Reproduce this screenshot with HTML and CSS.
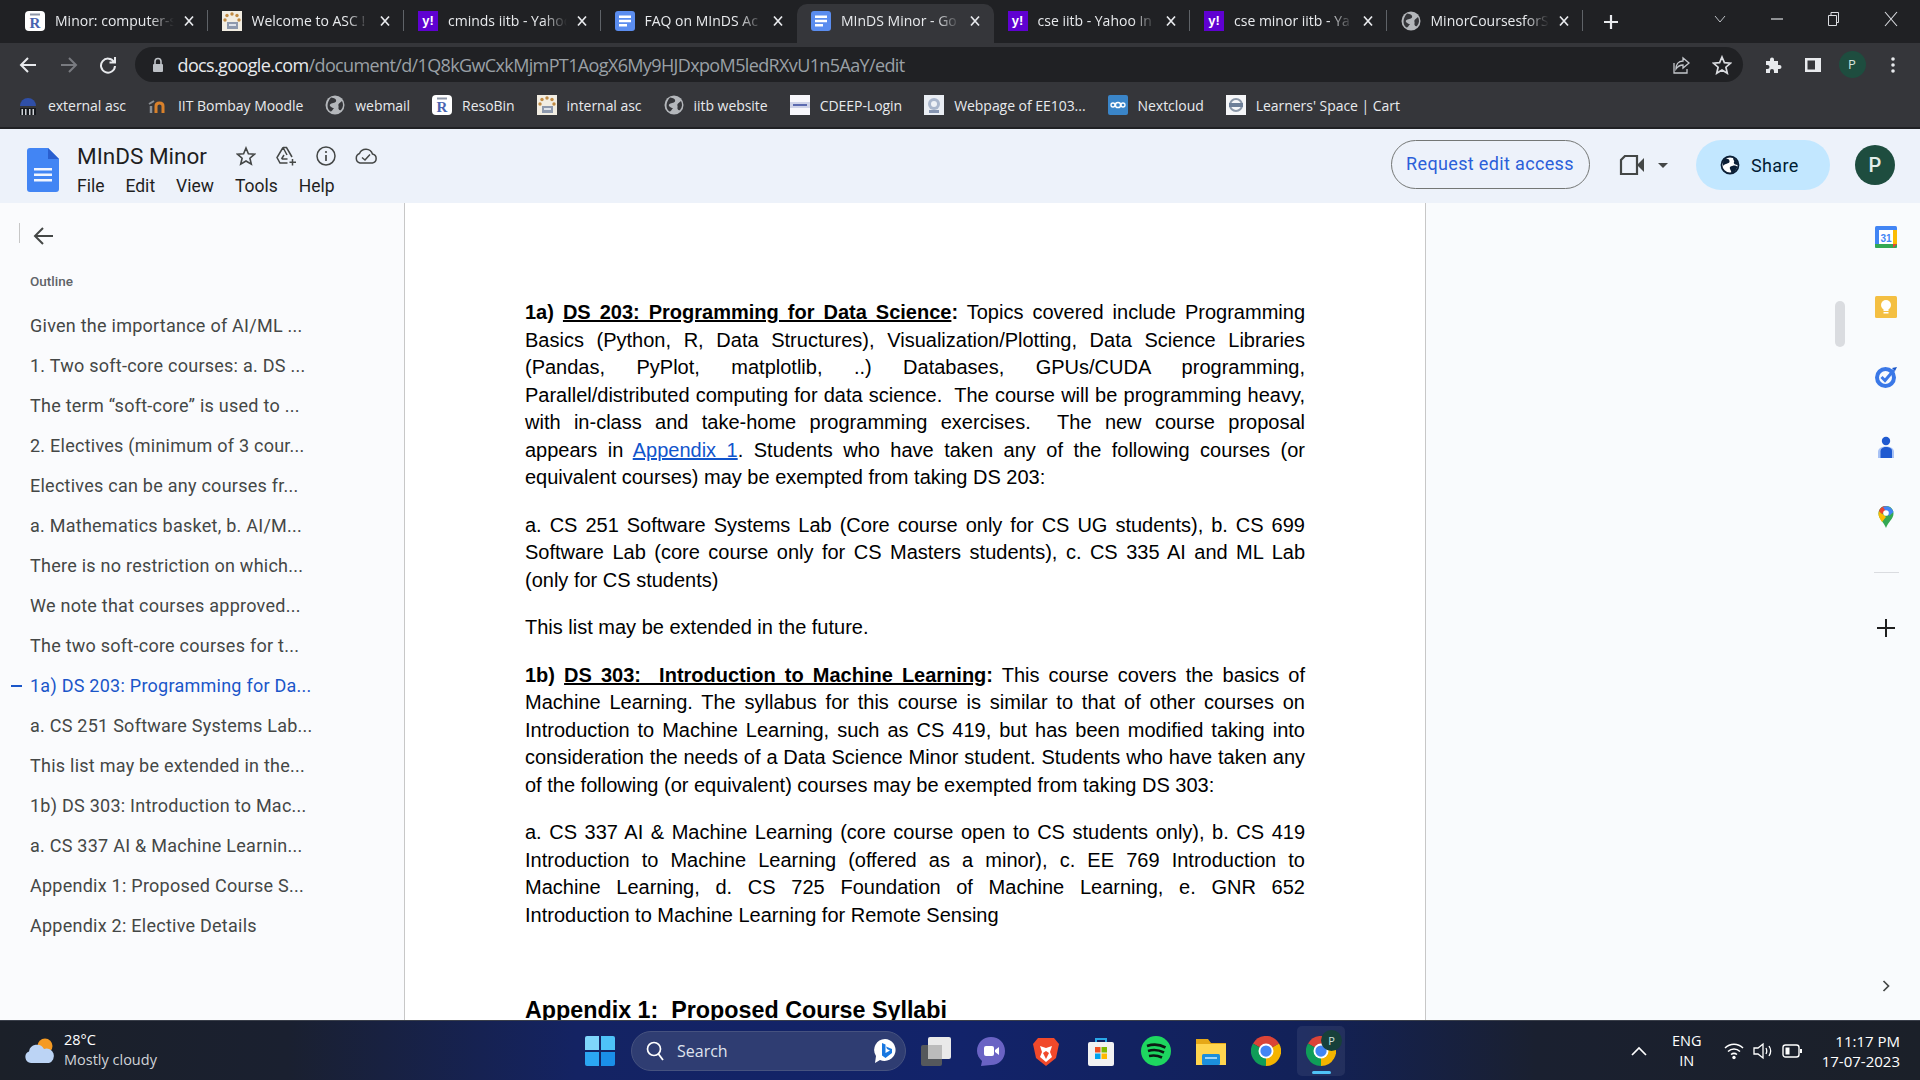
FILE: index.html
```html
<!DOCTYPE html>
<html lang="en">
<head>
<meta charset="utf-8">
<title>MInDS Minor - Google Docs</title>
<link rel="stylesheet" href="styles.css">
</head>
<body>
<svg class="defs" xmlns="http://www.w3.org/2000/svg">
  <symbol id="i-doc" viewBox="0 0 32 44"><path d="M3 0H21L32 11V41a3 3 0 0 1-3 3H3a3 3 0 0 1-3-3V3a3 3 0 0 1 3-3z" fill="#4285f4"/><path d="M21 0L32 11H21z" fill="#2a5fcf"/><path d="M7 20H25V22.500H7zM7 25.500H25V28H7zM7 31H25V33.500H7z" fill="#f1f5fe"/></symbol>
  <symbol id="i-doctab" viewBox="0 0 20 20"><rect width="20" height="20" rx="3" fill="#5b8def"/><path d="M4 4.500H16V7H4zM4 8.800H16V11.300H4zM4 13H12V15.500H4z" fill="#fff"/></symbol>
  <symbol id="i-globe" viewBox="0 0 20 20"><circle cx="10" cy="10" r="9.500" fill="#b4b7bb"/><path d="M6 2.500C9 3 12 4 11 6.500 10 8.500 6.500 7.500 5 9.500 4 11 7 13 9 13 7.500 15 6.500 17 5.500 16.500 2 14.500 1 8 6 2.500zM17 6C18.500 9 18.500 12 16 15 14.500 16 13 14 13.500 12.500 14 11 12.500 10 14 8.500z" fill="#35363a"/></symbol>
  <symbol id="i-reso" viewBox="0 0 20 20"><rect width="20" height="20" rx="4" fill="#fff"/><rect x="5" y="2.500" width="10" height="2" fill="#8d96a8"/><text class="reso-r" x="10" y="17" text-anchor="middle">R</text></symbol>
  <symbol id="i-asc" viewBox="0 0 20 20"><rect width="20" height="20" fill="#f2ede2"/><g fill="#c08a43"><circle cx="10" cy="3" r="1.700"/><circle cx="5" cy="4.500" r="1.700"/><circle cx="15" cy="4.500" r="1.700"/><circle cx="3" cy="9" r="1.700"/><circle cx="17" cy="9" r="1.700"/></g><rect x="5" y="11" width="11" height="7" fill="#8e99ad"/><rect x="7" y="13" width="7" height="2" fill="#dfe3ea"/></symbol>
  <symbol id="i-close" viewBox="0 0 14 14"><path d="M3 2.500L11 11.500M11 2.500L3 11.500" stroke="#e8eaed" stroke-width="1.700" fill="none"/></symbol>
  <symbol id="i-chrome" viewBox="0 0 32 32"><path d="M16 16L2.100 8A16 16 0 0 1 29.900 8z" fill="#db4437"/><path d="M16 16L29.900 8A16 16 0 0 1 16 32z" fill="#f4b400"/><path d="M16 16L16 32A16 16 0 0 1 2.100 8z" fill="#0f9d58"/><circle cx="16" cy="16" r="8" fill="#fff"/><circle cx="16" cy="16" r="6" fill="#4285f4"/></symbol>
</svg>

<div class="tabstrip">
  <div class="tab"><svg class="fav"><use href="#i-reso"/></svg><span class="tab-t">Minor: computer-s</span><svg class="x"><use href="#i-close"/></svg></div>
  <div class="tab"><svg class="fav"><use href="#i-asc"/></svg><span class="tab-t">Welcome to ASC !</span><svg class="x"><use href="#i-close"/></svg></div>
  <div class="tab"><span class="yh">y!</span><span class="tab-t">cminds iitb - Yahoo</span><svg class="x"><use href="#i-close"/></svg></div>
  <div class="tab tab-pre"><svg class="fav"><use href="#i-doctab"/></svg><span class="tab-t">FAQ on MInDS Ac</span><svg class="x"><use href="#i-close"/></svg></div>
  <div class="tab tab-on"><svg class="fav"><use href="#i-doctab"/></svg><span class="tab-t">MInDS Minor - Go</span><svg class="x"><use href="#i-close"/></svg></div>
  <div class="tab"><span class="yh">y!</span><span class="tab-t">cse iitb - Yahoo In</span><svg class="x"><use href="#i-close"/></svg></div>
  <div class="tab"><span class="yh">y!</span><span class="tab-t">cse minor iitb - Ya</span><svg class="x"><use href="#i-close"/></svg></div>
  <div class="tab"><svg class="fav"><use href="#i-globe"/></svg><span class="tab-t">MinorCoursesforS</span><svg class="x"><use href="#i-close"/></svg></div>
  <svg class="newtab" viewBox="0 0 18 18"><path d="M9 2V16M2 9H16" stroke="#e8eaed" stroke-width="2.200"/></svg>
  <div class="winctl">
    <svg class="wc-v" viewBox="0 0 14 10"><path d="M2 2L7 8L12 2" stroke="#bdc1c6" fill="none"/></svg>
    <svg class="wc-min" viewBox="0 0 14 14"><path d="M1 7H13" stroke="#dadce0" stroke-width="1.200"/></svg>
    <svg class="wc-max" viewBox="0 0 14 16"><path d="M2.500 4.500H10.500V14.500H2.500zM5 4.500V1.500H12.500V11.500H10.500" stroke="#dadce0" fill="none"/></svg>
    <svg class="wc-x" viewBox="0 0 16 16"><path d="M2 1L14 15M14 1L2 15" stroke="#dadce0" stroke-width="1.100"/></svg>
  </div>
</div>

<div class="toolbar">
  <svg class="nav" viewBox="0 0 18 18"><path d="M17 9H2M9 2L2 9L9 16" stroke="#e8eaed" stroke-width="2" fill="none"/></svg>
  <svg class="nav" viewBox="0 0 18 18"><path d="M1 9H16M9 2L16 9L9 16" stroke="#797b80" stroke-width="2" fill="none"/></svg>
  <svg class="nav" viewBox="0 0 18 18"><path d="M15 6A7 7 0 1 0 16 10M16 1V6.500H10.500" stroke="#e8eaed" stroke-width="2" fill="none"/></svg>
  <div class="omni">
    <svg class="lock" viewBox="0 0 12 16"><path d="M3 7V4.500a3 3 0 0 1 6 0V7" stroke="#bdc1c6" stroke-width="1.600" fill="none"/><rect x="1" y="7" width="10" height="8" rx="1" fill="#bdc1c6"/></svg>
    <span class="url"><span class="url-h">docs.google.com</span>/document/d/1Q8kGwCxkMjmPT1AogX6My9HJDxpoM5ledRXvU1n5AaY/edit</span>
    <svg class="om-i om-share" viewBox="0 0 20 20"><path d="M11 6C6 6 4 10 4 14 6 11 8 10 11 10V13L17 8L11 3zM2 8V18H15V14" stroke="#c4c7cc" stroke-width="1.300" fill="none"/></svg>
    <svg class="om-i om-star" viewBox="0 0 20 20"><path d="M10 2L12.400 7.700 18.500 8.200 13.900 12.200 15.300 18.200 10 15 4.700 18.200 6.100 12.200 1.500 8.200 7.600 7.700z" stroke="#dadce0" stroke-width="1.700" fill="none"/></svg>
  </div>
  <svg class="tb-puz" viewBox="0 0 18 18"><path d="M2 5H6V3.500a2 2 0 0 1 4 0V5H14V9H15.500a2 2 0 0 1 0 4H14V17H10V15a2 2 0 0 0-4 0V17H2V13H3.500a2 2 0 0 0 0-4H2z" fill="#e8eaed"/></svg>
  <svg class="tb-side" viewBox="0 0 18 18"><path d="M1 2H17V16H1zM3.500 4.500V13.500H11V4.500z" fill="#e8eaed" fill-rule="evenodd"/></svg>
  <span class="tb-av">P</span>
  <svg class="tb-dots" viewBox="0 0 4 18"><circle cx="2" cy="3" r="1.800" fill="#e8eaed"/><circle cx="2" cy="9" r="1.800" fill="#e8eaed"/><circle cx="2" cy="15" r="1.800" fill="#e8eaed"/></svg>
</div>

<div class="bookmarks">
  <div class="bm"><svg class="fav" viewBox="0 0 20 20"><path d="M2 11A8 8 0 0 1 18 11z" fill="#2f4fa8"/><path d="M2 13H18V20H2z" fill="#15181d"/><path d="M3.500 14H5V20H3.500zM7 14H8.500V20H7zM11 14H12.500V20H11zM14.500 14H16V20H14.500z" fill="#cfd2d6"/></svg><span>external asc</span></div>
  <div class="bm"><svg class="fav" viewBox="0 0 20 20"><path d="M3 18V11" stroke="#8a8f94" stroke-width="2.500"/><path d="M8 18V11C8 7 15 7 15 11V18" stroke="#d9812b" stroke-width="3" fill="none"/><path d="M1 9L6 6" stroke="#8a8f94" stroke-width="2"/></svg><span>IIT Bombay Moodle</span></div>
  <div class="bm"><svg class="fav"><use href="#i-globe"/></svg><span>webmail</span></div>
  <div class="bm"><svg class="fav"><use href="#i-reso"/></svg><span>ResoBin</span></div>
  <div class="bm"><svg class="fav"><use href="#i-asc"/></svg><span>internal asc</span></div>
  <div class="bm"><svg class="fav"><use href="#i-globe"/></svg><span>iitb website</span></div>
  <div class="bm"><svg class="fav" viewBox="0 0 20 20"><rect width="20" height="20" fill="#f7f7fb"/><rect y="7" width="20" height="6" fill="#cfd3e8"/><rect x="3" y="9" width="14" height="2" fill="#5c6bb0"/></svg><span>CDEEP-Login</span></div>
  <div class="bm"><svg class="fav" viewBox="0 0 20 20"><rect width="20" height="20" fill="#e9edf3"/><circle cx="10" cy="9" r="6" fill="#a9b6cc"/><path d="M5 15H15V18H5z" fill="#8594b0"/><circle cx="10" cy="9" r="3" fill="#eef1f6"/></svg><span>Webpage of EE103...</span></div>
  <div class="bm"><svg class="fav" viewBox="0 0 20 20"><rect width="20" height="20" rx="2" fill="#3a85c8"/><circle cx="5" cy="10" r="2" stroke="#fff" stroke-width="1.300" fill="none"/><circle cx="10" cy="10" r="2.600" stroke="#fff" stroke-width="1.500" fill="none"/><circle cx="15" cy="10" r="2" stroke="#fff" stroke-width="1.300" fill="none"/></svg><span>Nextcloud</span></div>
  <div class="bm"><svg class="fav" viewBox="0 0 20 20"><rect width="20" height="20" fill="#f5f6f8"/><circle cx="10" cy="10" r="6" stroke="#8a97a8" stroke-width="2" fill="none"/><rect x="3" y="8" width="14" height="4" fill="#6d7f98"/></svg><span>Learners' Space | Cart</span></div>
</div>

<header class="docbar">
  <svg class="docicon"><use href="#i-doc"/></svg>
  <div class="doctitle">
    <div class="titlerow">
      <span class="title">MInDS Minor</span>
      <svg class="ti ti-star" viewBox="0 0 20 20"><path d="M10 2L12.400 7.700 18.500 8.200 13.900 12.200 15.300 18.200 10 15 4.700 18.200 6.100 12.200 1.500 8.200 7.600 7.700z" stroke="#444746" stroke-width="1.600" fill="none"/></svg>
      <svg class="ti ti-drive" viewBox="0 0 22 20"><path d="M8 1.500H11.500L17 11M8 1.500L2 11.500 5 17H12.500M8 1.500L12 9 M6.500 13H12.500M6.500 13L9 9" stroke="#444746" stroke-width="1.500" fill="none"/><path d="M17.500 13V19.500M14.500 16.300H21" stroke="#444746" stroke-width="1.500"/></svg>
      <svg class="ti ti-info" viewBox="0 0 20 20"><circle cx="10" cy="10" r="9" stroke="#444746" stroke-width="1.500" fill="none"/><path d="M10 9V15" stroke="#444746" stroke-width="1.700"/><circle cx="10" cy="6" r="1.100" fill="#444746"/></svg>
      <svg class="ti ti-cloud" viewBox="0 0 24 16"><path d="M6 15A5 5 0 0 1 5.500 5.500 7 7 0 0 1 18.500 6 4.600 4.600 0 0 1 18.500 15z" stroke="#444746" stroke-width="1.500" fill="none"/><path d="M8 9.500L11 12L16 6.500" stroke="#444746" stroke-width="1.500" fill="none"/></svg>
    </div>
    <nav class="menu"><span>File</span><span>Edit</span><span>View</span><span>Tools</span><span>Help</span></nav>
  </div>
  <div class="docactions">
    <button class="req">Request edit access</button>
    <svg class="cam" viewBox="0 0 26 20"><path d="M6 1H18V19H2V5z" stroke="#444746" stroke-width="2.200" fill="none"/><path d="M18 10L25 3V17z" fill="#444746"/></svg>
    <svg class="caret" viewBox="0 0 10 5"><path d="M0 0H10L5 5z" fill="#444746"/></svg>
    <button class="share"><svg class="share-g" viewBox="0 0 20 20"><circle cx="10" cy="10" r="8.500" stroke="#0b1f36" stroke-width="1.800" fill="#fff"/><path d="M4 3.500C7 3 10 4 9.500 7 9 9 5 8 3 11 3 7 3 5 4 3.500zM10 12C13 10 16 10 17.500 12 16.500 15 13 18 11 18 12 16 9 14 10 12zM13 3C16 4 18 7 18 10 16 10 13 9 14 7 15 6 13 5 13 3z" fill="#0b1f36"/></svg><span>Share</span></button>
    <span class="avatar">P</span>
  </div>
</header>

<main class="work">
  <aside class="outline">
    <div class="backrow"><i class="tick"></i><svg class="back" viewBox="0 0 20 20"><path d="M20 10H2M10 2L2 10L10 18" stroke="#444746" stroke-width="2" fill="none"/></svg></div>
    <div class="ol-label">Outline</div>
    <ul class="ol-list">
      <li>Given the importance of AI/ML ...</li>
      <li>1. Two soft-core courses: a. DS ...</li>
      <li>The term “soft-core” is used to ...</li>
      <li>2. Electives (minimum of 3 cour...</li>
      <li>Electives can be any courses fr...</li>
      <li>a. Mathematics basket, b. AI/M...</li>
      <li>There is no restriction on which...</li>
      <li>We note that courses approved...</li>
      <li>The two soft-core courses for t...</li>
      <li class="ol-on">1a) DS 203: Programming for Da...</li>
      <li>a. CS 251 Software Systems Lab...</li>
      <li>This list may be extended in the...</li>
      <li>1b) DS 303: Introduction to Mac...</li>
      <li>a. CS 337 AI &amp; Machine Learnin...</li>
      <li>Appendix 1: Proposed Course S...</li>
      <li>Appendix 2: Elective Details</li>
    </ul>
  </aside>

  <article class="page">
    <p>
      <span class="j"><b>1a) <u>DS 203: Programming for Data Science</u>:</b> Topics covered include Programming</span>
      <span class="j">Basics (Python, R, Data Structures), Visualization/Plotting, Data Science Libraries</span>
      <span class="j">(Pandas, PyPlot, matplotlib, ..) Databases, GPUs/CUDA programming,</span>
      <span class="j">Parallel/distributed computing for data science.&nbsp; The course will be programming heavy,</span>
      <span class="j">with in-class and take-home programming exercises.&nbsp; The new course proposal</span>
      <span class="j">appears in <a class="lnk">Appendix 1</a>. Students who have taken any of the following courses (or</span>
      <span class="l">equivalent courses) may be exempted from taking DS 203:</span>
    </p>
    <p>
      <span class="j">a. CS 251 Software Systems Lab (Core course only for CS UG students), b. CS 699</span>
      <span class="j">Software Lab (core course only for CS Masters students), c. CS 335 AI and ML Lab</span>
      <span class="l">(only for CS students)</span>
    </p>
    <p><span class="l">This list may be extended in the future.</span></p>
    <p>
      <span class="j"><b>1b) <u>DS 303:&nbsp; Introduction to Machine Learning</u>:</b> This course covers the basics of</span>
      <span class="j">Machine Learning. The syllabus for this course is similar to that of other courses on</span>
      <span class="j">Introduction to Machine Learning, such as CS 419, but has been modified taking into</span>
      <span class="j">consideration the needs of a Data Science Minor student. Students who have taken any</span>
      <span class="l">of the following (or equivalent) courses may be exempted from taking DS 303:</span>
    </p>
    <p>
      <span class="j">a. CS 337 AI &amp; Machine Learning (core course open to CS students only), b. CS 419</span>
      <span class="j">Introduction to Machine Learning (offered as a minor), c. EE 769 Introduction to</span>
      <span class="j">Machine Learning, d. CS 725 Foundation of Machine Learning, e. GNR 652</span>
      <span class="l">Introduction to Machine Learning for Remote Sensing</span>
    </p>
    <h2 class="h-app">Appendix 1:&nbsp; Proposed Course Syllabi</h2>
  </article>

  <div class="gutter"><div class="thumb"></div></div>

  <aside class="sidepanel">
    <svg class="sp" viewBox="0 0 24 24"><rect x="1" y="1" width="22" height="22" rx="1.500" fill="#4285f4"/><path d="M1 19H23V21.500A1.500 1.500 0 0 1 21.500 23H2.500A1.500 1.500 0 0 1 1 21.500z" fill="#34a853"/><path d="M19 5H23V19H19z" fill="#fbbc04"/><rect x="5" y="5" width="14" height="14" fill="#fff"/><text class="cal" x="12" y="16.500" text-anchor="middle">31</text><path d="M19 19H23L19 23z" fill="#ea4335"/></svg>
    <svg class="sp" viewBox="0 0 24 24"><rect x="1" y="1" width="22" height="22" rx="1.500" fill="#f4bf42"/><circle cx="12" cy="10" r="5" fill="#fff"/><rect x="9.500" y="13" width="5" height="3" fill="#fff"/><rect x="9.500" y="17" width="5" height="1.500" fill="#fff"/></svg>
    <svg class="sp" viewBox="0 0 24 24"><circle cx="11.500" cy="12.500" r="8.500" stroke="#3b78e7" stroke-width="4" fill="none"/><path d="M7.500 12L11 15.500L20 5" stroke="#3b78e7" stroke-width="3" fill="none"/><path d="M18 3L23 2L21 6z" fill="#1a56c9"/></svg>
    <svg class="sp" viewBox="0 0 24 24"><circle cx="12" cy="6" r="4.200" fill="#1f5ad0"/><path d="M4 23V17C4 13 8 11.500 12 11.500S20 13 20 17V23z" fill="#a8c2f5"/><path d="M6.500 23V16.500C6.500 13.500 9 12 12 12S18 13 18 16V23z" fill="#1f5ad0"/></svg>
    <svg class="sp" viewBox="0 0 24 24"><path d="M12 1C7 1 4.500 4.500 4.500 8.500 4.500 14 10 17 12 23 14 17 19.500 14 19.500 8.500 19.500 4.500 17 1 12 1z" fill="#34a853"/><path d="M5 6L12 12 8 17C6 14 4.500 11.500 4.500 8.500z" fill="#fbbc04"/><path d="M5 6C6 3 9 1 12 1L12 5 8 9z" fill="#ea4335"/><path d="M9 2C14 0 18 3 19.500 7L15 11z" fill="#4285f4"/><circle cx="12" cy="8" r="2.800" fill="#fff"/></svg>
    <i class="sp-div"></i>
    <svg class="sp-plus" viewBox="0 0 18 18"><path d="M9 0V18M0 9H18" stroke="#1f1f1f" stroke-width="2"/></svg>
    <svg class="sp-chev" viewBox="0 0 8 12"><path d="M1.500 1L6.500 6L1.500 11" stroke="#444746" stroke-width="1.700" fill="none"/></svg>
  </aside>
</main>

<footer class="taskbar">
  <div class="tk-left">
    <svg class="wx" viewBox="0 0 32 26"><circle cx="21" cy="8" r="7.500" fill="#f59a23"/><path d="M7 25A6 6 0 0 1 5 13.500 8 8 0 0 1 20 11 7 7 0 0 1 25 25z" fill="#bcd4f5"/></svg>
    <div class="wx-t"><div>28°C</div><div class="wx-s">Mostly cloudy</div></div>
  </div>
  <svg class="win" viewBox="0 0 30 30"><path d="M0 2Q0 0 2 0H14V14H0z" fill="#7fd6fb"/><path d="M16 0H28Q30 0 30 2V14H16z" fill="#4ec2f8"/><path d="M0 16H14V30H2Q0 30 0 28z" fill="#2ba6f2"/><path d="M16 16H30V28Q30 30 28 30H16z" fill="#1a8fe8"/></svg>
  <div class="search">
    <svg class="s-mag" viewBox="0 0 18 20"><circle cx="8" cy="8" r="6.500" stroke="#fff" stroke-width="1.700" fill="none"/><path d="M12.500 13L17 19" stroke="#fff" stroke-width="1.800"/></svg>
    <span>Search</span>
    <svg class="s-bing" viewBox="0 0 24 26"><path d="M12 1A11 11 0 1 1 7 22L2 25L3 18A11 11 0 0 1 12 1z" fill="#fff"/><path d="M9 5L12.500 6.500V15L17 12.500 14 11 13 8.500 19 11V15L12.500 20 9 17.500z" fill="#1877e0"/></svg>
  </div>
  <div class="apps">
    <div class="app"><svg class="ai-v" viewBox="0 0 30 30"><rect x="0" y="9" width="21" height="21" rx="2" fill="#55585c"/><rect x="7" y="1" width="23" height="22" rx="2" fill="#e9e9e9"/><rect x="7" y="9" width="14" height="14" fill="#bbb"/></svg></div>
    <div class="app"><svg class="ai" viewBox="0 0 30 30"><path d="M15 1C23 1 29 7 29 15S23 29 15 29L5 30 6 25C3 22 1 19 1 15 1 7 7 1 15 1z" fill="#6a63c4"/><rect x="8" y="10" width="10" height="10" rx="2" fill="#fff"/><path d="M19 14L23 11V19L19 16z" fill="#fff"/></svg></div>
    <div class="app"><svg class="ai" viewBox="0 0 30 30"><path d="M7 2H23L28 8 25 22 15 30 5 22 2 8z" fill="#f1492a"/><path d="M9 10L15 12 21 10 19 16 21 21 15 26 9 21 11 16z" fill="#fff"/><path d="M12 17L15 15 18 17 15 23z" fill="#f1492a"/></svg></div>
    <div class="app"><svg class="ai" viewBox="0 0 30 30"><path d="M10 6V3H20V6" stroke="#29a8e8" stroke-width="2" fill="none"/><rect x="2" y="6" width="26" height="24" rx="2" fill="#f2f2f2"/><rect x="9" y="11" width="5.500" height="5.500" fill="#f25022"/><rect x="15.500" y="11" width="5.500" height="5.500" fill="#7fba00"/><rect x="9" y="17.500" width="5.500" height="5.500" fill="#00a4ef"/><rect x="15.500" y="17.500" width="5.500" height="5.500" fill="#ffb900"/></svg></div>
    <div class="app"><svg class="ai" viewBox="0 0 30 30"><circle cx="15" cy="15" r="15" fill="#1ed760"/><path d="M6 10C12 8 19 8.500 24.500 11.500M7 15C12 13.500 18 14 23 16.500M8 20C12.500 19 17 19.500 21 21.500" stroke="#0c1a12" stroke-width="2.600" fill="none"/></svg></div>
    <div class="app"><svg class="ai" viewBox="0 0 30 30"><path d="M0 3H12L15 7H30V12H0z" fill="#e6a817"/><rect y="8" width="30" height="21" fill="#ffd54f"/><rect x="6" y="18" width="18" height="11" rx="1.500" fill="#1c8fdc"/><rect x="9" y="21" width="12" height="2" fill="#9fd6f7"/></svg></div>
    <div class="app"><svg class="ai" viewBox="0 0 32 32"><use href="#i-chrome"/></svg></div>
    <div class="app app-on"><svg class="ai" viewBox="0 0 32 32"><use href="#i-chrome"/></svg><span class="badge">P</span><i class="runbar"></i></div>
  </div>
  <div class="tray">
    <svg class="t-up" viewBox="0 0 16 10"><path d="M1 9L8 2L15 9" stroke="#fff" stroke-width="1.700" fill="none"/></svg>
    <div class="t-lang"><div>ENG</div><div>IN</div></div>
    <svg class="t-ic" viewBox="0 0 20 18"><path d="M1 6C6 1 14 1 19 6M4 9.500C7.500 6 12.500 6 16 9.500M7 12.500C9 11 11 11 13 12.500" stroke="#fff" stroke-width="1.500" fill="none"/><circle cx="10" cy="15.500" r="1.700" fill="#fff"/></svg>
    <svg class="t-ic" viewBox="0 0 20 18"><path d="M1 6H5L10 2V16L5 12H1z" stroke="#fff" stroke-width="1.300" fill="none"/><path d="M13 6C14 8 14 10 13 12M16 4C18 7 18 11 16 14" stroke="#fff" stroke-width="1.300" fill="none"/></svg>
    <svg class="t-ic" viewBox="0 0 20 18"><rect x="1" y="3" width="16" height="12" rx="2.500" stroke="#fff" stroke-width="1.400" fill="none"/><rect x="3.500" y="5.500" width="4" height="7" fill="#fff"/><rect x="18" y="7" width="2" height="4" fill="#fff"/></svg>
    <div class="t-clock"><div>11:17 PM</div><div>17-07-2023</div></div>
  </div>
</footer>
</body>
</html>
```
FILE: styles.css
```css
* { box-sizing: border-box; }
html, body { margin: 0; padding: 0; }
body {
  width: 1920px; height: 1080px; overflow: hidden;
  display: flex; flex-direction: column;
  font-family: "Open Sans", "Noto Sans", sans-serif;
  background: #fff;
}
.defs { display: none; }
svg { flex: none; display: block; }
.reso-r { font: 700 15px "Liberation Serif", serif; fill: #4a64b0; }

/* tab strip */
.tabstrip { height: 43px; background: #202124; display: flex; align-items: center; padding-left: 11px; color: #e8eaed; font-size: 14px; flex: none; }
.tab { width: 196.500px; height: 43px; padding: 0 12px 2px 14px; display: flex; align-items: center; position: relative; }
.tab::after { content: ""; position: absolute; right: 0; top: 10px; bottom: 12px; width: 1px; background: #5f6368; }
.tab-pre::after, .tab-on::after { display: none; }
.tab-on { background: #35363a; border-radius: 10px 10px 0 0; height: 39px; margin-top: 4px; padding-bottom: 6px; }
.fav { width: 20px; height: 20px; }
.yh { width: 20px; height: 20px; background: #5f01d1; color: #fff; font: 700 13px/20px "Liberation Sans", sans-serif; text-align: center; flex: none; }
.tab-t { flex: 1; min-width: 0; margin-left: 10px; white-space: nowrap; overflow: hidden; -webkit-mask-image: linear-gradient(to right, #000 80%, transparent 100%); mask-image: linear-gradient(to right, #000 80%, transparent 100%); }
.x { width: 14px; height: 14px; margin-left: 8px; }
.newtab { width: 18px; height: 18px; margin-left: 19px; }
.winctl { margin-left: auto; display: flex; align-items: center; height: 43px; padding-bottom: 6px; }
.wc-v { width: 14px; height: 10px; margin-right: 43px; }
.wc-min { width: 14px; height: 14px; margin-right: 42px; }
.wc-max { width: 14px; height: 16px; margin-right: 43px; }
.wc-x { width: 16px; height: 16px; margin-right: 21px; }

/* toolbar */
.toolbar { height: 43px; background: #35363a; display: flex; align-items: center; padding-left: 19px; flex: none; }
.nav { width: 18px; height: 18px; margin-right: 22.500px; }
.nav:nth-child(2) { margin-right: 21px; }
.nav:nth-child(3) { margin-right: 18px; }
.omni { width: 1608px; height: 35px; border-radius: 18px; background: #202124; display: flex; align-items: center; padding-left: 17px; margin-left: 0; color: #9aa0a6; font-size: 18px; }
.lock { width: 12px; height: 16px; }
.url { margin-left: 14px; white-space: nowrap; letter-spacing: -.63px; }
.url-h { color: #e8eaed; }
.om-i { width: 20px; height: 20px; }
.om-share { margin-left: auto; }
.om-star { margin-left: 20px; margin-right: 11px; }
.tb-puz { width: 18px; height: 18px; margin-left: 21px; }
.tb-side { width: 18px; height: 18px; margin-left: 22px; }
.tb-av { width: 27px; height: 27px; border-radius: 50%; background: #1e4d3f; color: #d7e3de; font-size: 13px; line-height: 27px; text-align: center; margin-left: 17px; }
.tb-dots { width: 4px; height: 18px; margin-left: 25px; }

/* bookmarks */
.bookmarks { height: 43px; background: #35363a; display: flex; align-items: center; padding: 0 0 3px 18px; gap: 22px; color: #e8eaed; font-size: 14px; border-bottom: 2px solid #202124; flex: none; letter-spacing: -.04px; }
.bm { display: flex; align-items: center; gap: 10px; white-space: nowrap; }

/* docs header */
.docbar { height: 74px; background: #edf2fa; display: flex; align-items: flex-start; padding: 19px 25px 0 27px; flex: none; }
.docicon { width: 32px; height: 44px; }
.doctitle { margin-left: 18px; margin-top: -8px; }
.titlerow { display: flex; align-items: center; height: 32px; }
.title { font-family: Roboto, sans-serif; font-size: 22.500px; color: #1f1f1f; width: 159px; white-space: nowrap; }
.ti { width: 20px; height: 20px; }
.ti-drive { width: 22px; margin-left: 19px; }
.ti-info { margin-left: 19px; }
.ti-cloud { width: 24px; height: 16px; margin-left: 18px; }
.menu { display: flex; gap: 21px; font-family: Roboto, sans-serif; font-size: 17.500px; color: #1f1f1f; margin-top: 0; line-height: 28px; }
.docactions { margin-left: auto; display: flex; align-items: center; margin-top: -8px; height: 50px; }
.req { width: 199px; height: 49px; border-radius: 25px; border: 1px solid #747775; background: transparent; color: #2b5fd9; font: 400 18px Roboto, sans-serif; letter-spacing: .35px; padding: 0 0 3px; margin-top: -1px; }
.cam { width: 26px; height: 20px; margin-left: 29.500px; }
.caret { width: 10px; height: 5px; margin-left: 13px; }
.share { width: 134px; height: 50px; border-radius: 25px; border: 0; background: #c2e7ff; color: #001d35; font: 400 18px Roboto, sans-serif; letter-spacing: .35px; display: flex; align-items: center; justify-content: flex-start; gap: 11px; margin-left: 28px; padding: 0 0 0 24px; }
.share-g { width: 20px; height: 20px; }
.avatar { width: 40px; height: 40px; border-radius: 50%; background: #1e4d3f; color: #e3eeea; font: 500 20px/40px Roboto, sans-serif; text-align: center; margin-left: 25px; }

/* workspace */
.work { flex: 1; min-height: 0; display: flex; background: #f9fbfd; overflow: hidden; }
.outline { width: 405px; flex: none; border-right: 1px solid #c7c7c7; background: #fafbfd; padding-top: 18px; }
.backrow { display: flex; align-items: center; height: 24px; padding-left: 19px; }
.tick { width: 1px; height: 20px; background: #c7c7c7; }
.back { width: 20px; height: 20px; margin: 6px 0 0 13px; }
.ol-label { margin: 26px 0 0 30px; font: 500 13.500px/20px Roboto, sans-serif; color: #5f6368; }
.ol-list { list-style: none; margin: 15px 0 0; padding: 0 0 0 30px; font: 400 18px/40px Roboto, sans-serif; color: #444746; letter-spacing: .25px; }
.ol-list li { height: 40px; white-space: nowrap; position: relative; }
.ol-on { color: #1a56c9; }
.ol-on::before { content: ""; position: absolute; left: -19px; top: 19px; width: 11px; height: 2px; background: #1a56c9; }

.page { width: 1021px; flex: none; background: #fff; border-right: 1px solid #c7c7c7; padding: 96px 120px 0 120px; font-family: "Liberation Sans", Arial, sans-serif; font-size: 20px; line-height: 27.500px; color: #000; overflow: hidden; }
.page p { margin: 0 0 20px; }
.j, .l { display: block; white-space: normal; }
.j { text-align: justify; text-align-last: justify; }
.lnk { color: #1155cc; text-decoration: underline; }
.h-app { font-size: 23.300px; font-weight: 700; line-height: 32px; margin: 65px 0 0; }

.gutter { flex: 1; padding: 98px 0 0 409px; }
.thumb { width: 10px; height: 46px; border-radius: 5px; background: #dadce0; }
.sidepanel { width: 68px; flex: none; display: flex; flex-direction: column; align-items: center; padding-top: 22px; }
.sp { width: 24px; height: 24px; margin-bottom: 46px; }
.cal { font: 700 10px "Liberation Sans", sans-serif; fill: #4285f4; }
.sp-div { width: 25px; height: 1px; background: #dadce0; margin-top: -3px; }
.sp-plus { width: 18px; height: 18px; margin-top: 46px; }
.sp-chev { width: 8px; height: 12px; margin-top: 343px; }

/* taskbar */
.taskbar { height: 60px; flex: none; display: flex; align-items: center; color: #fff; border-top: 1px solid #3a3f4a; background: linear-gradient(to right, #1b2029 0%, #1a2030 15%, #142363 30%, #12236a 50%, #122158 68%, #1a2030 80%, #1b2029 100%); }
.tk-left { width: 585px; flex: none; display: flex; align-items: center; padding-left: 24px; }
.wx { width: 32px; height: 26px; }
.wx-t { margin-left: 8px; font-size: 14.500px; line-height: 20px; margin-top: -2px; }
.wx-s { color: #d0d3d8; }
.win { width: 30px; height: 30px; flex: none; }
.search { width: 275px; height: 40px; margin-left: 16px; border-radius: 20px; background: #2f3d72; border: 1px solid #46527f; display: flex; align-items: center; padding-left: 14px; font-size: 16px; color: #dfe3ee; flex: none; }
.s-mag { width: 18px; height: 20px; }
.search span { margin-left: 13px; }
.s-bing { width: 24px; height: 26px; margin-left: auto; margin-right: 8px; }
.apps { display: flex; align-items: center; margin-left: 2px; }
.app { width: 55px; height: 50px; display: flex; align-items: center; justify-content: center; position: relative; flex: none; }
.ai, .ai-v { width: 30px; height: 30px; }
.app-on { width: 48px; margin-left: 4px; border-radius: 5px; background: rgba(255,255,255,.07); }
.badge { position: absolute; right: 3px; top: 4px; width: 21px; height: 21px; border-radius: 50%; background: #17403a; color: #cfe0da; font-size: 11px; line-height: 21px; text-align: center; }
.runbar { position: absolute; left: 15px; bottom: 2px; width: 19px; height: 3px; border-radius: 2px; background: #4fc3f7; }
.tray { margin-left: auto; display: flex; align-items: center; padding-right: 20px; font-size: 14.500px; }
.t-up { width: 16px; height: 10px; }
.t-lang { width: 36px; margin-left: 22px; text-align: center; line-height: 20px; }
.t-ic { width: 20px; height: 18px; margin-left: 9px; }
.t-lang + .t-ic { margin-left: 19px; }
.t-clock { margin-left: 20px; text-align: right; line-height: 20px; font-size: 15px; }
```
